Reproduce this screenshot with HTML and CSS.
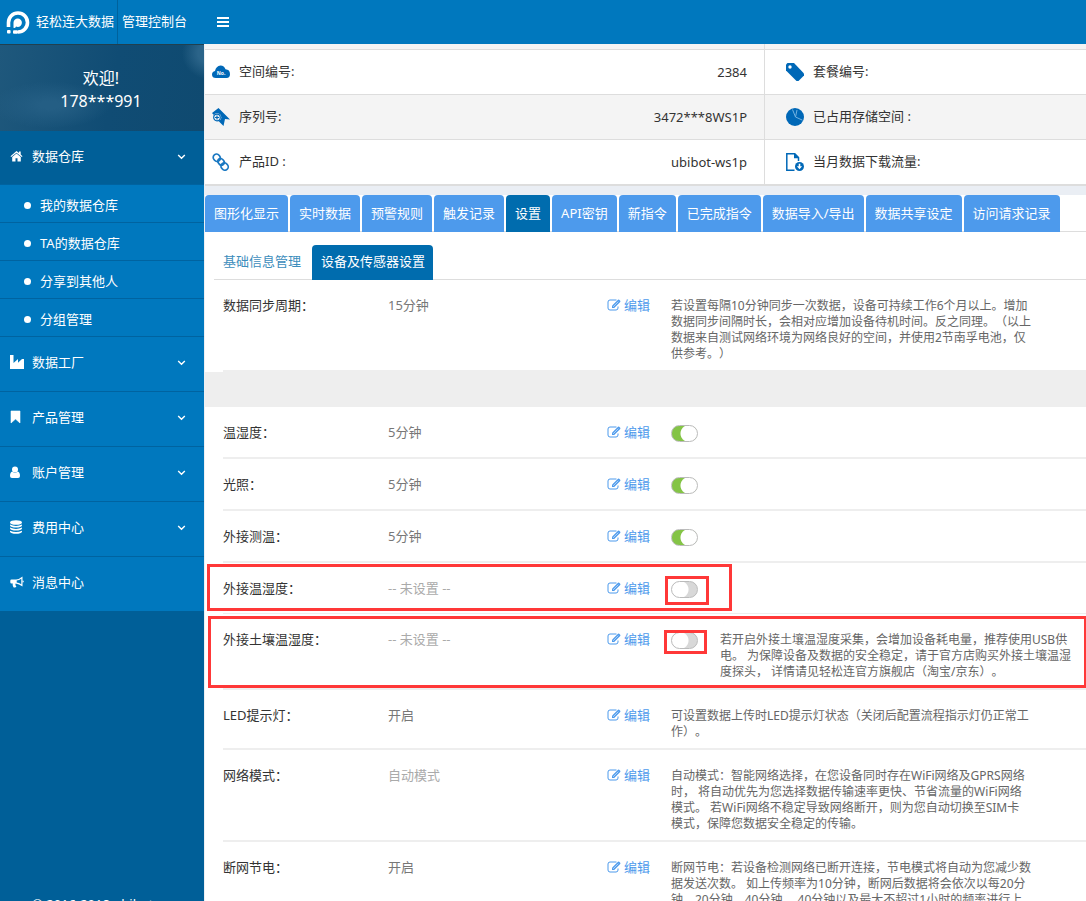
FILE: index.html
```html
<!DOCTYPE html>
<html lang="zh-CN">
<head>
<meta charset="utf-8">
<title>轻松连大数据 管理控制台</title>
<link rel="stylesheet" href="styles.css">
</head>
<body>
<svg class="defs" aria-hidden="true">
  <symbol id="edit" viewBox="0 0 14 12">
    <path d="M9.500 1H3Q1 1 1 3v6q0 2 2 2h6q2 0 2-2V7.500" fill="none" stroke="currentColor" stroke-width="1"/>
    <path d="M5 9V6.800L11 .8q.6-.5 1.200 0l1 1q.5.600 0 1.200L7.200 9z" fill="currentColor"/>
    <path d="M6 7.900 11.300 2.600" stroke="#fff" stroke-width=".6"/>
  </symbol>
  <symbol id="down" viewBox="0 0 8 6"><path d="M.7 1 4 4.300 7.300 1" fill="none" stroke="currentColor" stroke-width="1.400"/></symbol>
</svg>
<header class="topbar">
  <a class="brand" href="#">
    <svg width="24" height="24" viewBox="0 0 24 24"><path d="M2.500 16V11.500A9.500 9.500 0 1 1 12 21" fill="none" stroke="#fff" stroke-width="3.600"/><path d="M7.500 16.800V11.700a4.200 4.200 0 1 1 4.200 4.200q-1 0-1.700-.4-.4 2-2.500 1.300z" fill="#fff"/><rect x="1" y="19" width="3.600" height="3.600" rx="1" fill="#fff"/><rect x="7" y="19.200" width="5" height="3.600" rx="1" fill="#fff"/></svg>
    <span>轻松连大数据</span>
  </a>
  <a class="console" href="#">管理控制台</a>
  <button class="burger" aria-label="菜单"><svg width="12" height="10" viewBox="0 0 12 10"><path d="M0 1h12M0 5h12M0 9h12" stroke="#fff" stroke-width="2"/></svg></button>
</header>
<div class="shell">
  <aside class="sidebar">
    <div class="user"><div>欢迎!</div><div>178***991</div></div>
    <nav>
      <a class="item active" href="#"><svg class="mi" viewBox="0 0 14 14"><path d="M6.500 2 .5 7.200l.7.900L6.500 3.700l5.300 4.400.7-.9-1.800-1.600V2.500H9v1.600z" fill="#fff"/><path d="M6.500 4.600 2.200 8.100V12.500H5.500V9.300h2v3.200h3.300V8.100z" fill="#fff"/></svg><span>数据仓库</span><svg class="arrow"><use href="#down"/></svg></a>
      <div class="sub">
        <a href="#">我的数据仓库</a>
        <a href="#">TA的数据仓库</a>
        <a href="#">分享到其他人</a>
        <a href="#">分组管理</a>
      </div>
      <a class="item" href="#"><svg class="mi" viewBox="0 0 14 14"><path d="M0 0h3.500v8L8 4v3.800L12 4h2v10H0z" fill="#fff"/></svg><span>数据工厂</span><svg class="arrow"><use href="#down"/></svg></a>
      <a class="item" href="#"><svg class="mi" viewBox="0 0 14 14"><path d="M1 1h9v12L5.500 9 1 13z" fill="#fff" stroke="#fff" stroke-width=".6" stroke-linejoin="round"/></svg><span>产品管理</span><svg class="arrow"><use href="#down"/></svg></a>
      <a class="item" href="#"><svg class="mi" viewBox="0 0 14 14"><circle cx="5" cy="4.500" r="3" fill="#fff"/><path d="M2.400 6.500Q0 7 0 11q0 2 2 2h6q2 0 2-2 0-4-2.400-4.500Q5 9 2.400 6.500z" fill="#fff"/></svg><span>账户管理</span><svg class="arrow"><use href="#down"/></svg></a>
      <a class="item" href="#"><svg class="mi" viewBox="0 0 14 14"><ellipse cx="6" cy="2.500" rx="6" ry="2.300" fill="#fff"/><path d="M0 4.500q6 2.800 12 0v1q-1 2-6 2t-6-2zM0 7.600q6 2.800 12 0v1q-1 2-6 2t-6-2zM0 10.700q6 2.800 12 0v1q-1 2-6 2t-6-2z" fill="#fff"/></svg><span>费用中心</span><svg class="arrow"><use href="#down"/></svg></a>
      <a class="item" href="#"><svg class="mi" viewBox="0 0 14 14"><path d="M1.500 4.500H6Q9 4.500 12.500 1.500v10Q9 8.800 5.500 8.500q-.6 1.500.9 3.300-1.200 1.300-3 .4-1.200-2.300-.6-3.700H1.500Q.3 8.500.3 7.300V5.700Q.3 4.500 1.500 4.500z" fill="#fff"/><path d="M6.700 5.500Q9.300 5.300 11.300 3.800v5.500Q9 7.900 6.700 7.600z" fill="#0078be"/><path d="M12.500 5.500q1.300.2 1.300 1t-1.300 1z" fill="#fff"/></svg><span>消息中心</span></a>
    </nav>
    <div class="copy">© 2016-2018 ubibot</div>
  </aside>
  <main>
    <table class="info">
      <tbody>
        <tr class="sliver"><td colspan="2"></td><td></td></tr>
        <tr>
          <th scope="row"><svg class="ii" viewBox="0 0 18 18"><path d="M4 15Q0 15 0 11.500 0 8.500 3 8 4 3 8.500 2.500q3.800 0 5 3.800 4.500.2 4.500 5Q18 15 14.500 15z" fill="#0068b7"/><text x="9" y="12" class="no">No.</text></svg>空间编号:</th><td>2384</td>
          <th scope="row" class="right"><svg class="ii" viewBox="0 0 18 18"><path d="M0 1.500 1.500 0H8l10 10.500v2L12.500 18h-2L0 7.500z" fill="#0068b7"/><circle cx="4" cy="4" r="1.700" fill="#fff"/></svg>套餐编号:</th>
        </tr>
        <tr>
          <th scope="row"><svg class="ii" viewBox="0 0 18 18"><path d="M0 5 6.500 0 18 11.500l-5-.4-1.500 6.900L7 13.500z" fill="#0068b7"/><circle cx="5" cy="9.500" r="4.300" fill="#f4f4f4"/><circle cx="5" cy="9.500" r="3.300" fill="none" stroke="#0068b7" stroke-width="1.200"/><path d="M5 7.500v4M3 9.500h4M7.500 12l1.500 1.500" stroke="#0068b7" stroke-width="1.200"/></svg>序列号:</th><td>3472***8WS1P</td>
          <th scope="row" class="right"><svg class="ii" viewBox="0 0 18 18"><circle cx="9" cy="9" r="9" fill="#0068b7"/><path d="M6.500 1.500 9.500 9 11 2M9.500 9l7 3.200" fill="none" stroke="#72b2e0" stroke-width="1"/></svg>已占用存储空间 :</th>
        </tr>
        <tr>
          <th scope="row"><svg class="ii" viewBox="0 0 18 18"><g fill="none" stroke="#1a78c2" stroke-width="1.700"><rect x="1" y="1.500" width="7.600" height="6.600" rx="3.300" transform="rotate(50 4.800 4.800)"/><rect x="5.500" y="6" width="7" height="5.600" rx="2.800" transform="rotate(50 9 8.800)"/><rect x="8.800" y="10.200" width="7.600" height="6.600" rx="3.300" transform="rotate(50 12.600 13.500)"/></g></svg>产品ID :</th><td>ubibot-ws1p</td>
          <th scope="row" class="right"><svg class="ii" viewBox="0 0 18 18"><path d="M8.500 17.200H.8V.8h8l3.700 3.700V8" fill="none" stroke="#0068b7" stroke-width="1.500"/><path d="M8 0l5.200 5.200H8z" fill="#0068b7"/><circle cx="13.500" cy="13.500" r="4.500" fill="#0068b7"/><path d="M12.700 10.700h1.600v2.500h1.800l-2.600 3-2.600-3h1.800z" fill="#fff"/></svg>当月数据下载流量:</th>
        </tr>
      </tbody>
    </table>
    <nav class="tabs">
      <a href="#">图形化显示</a><a href="#">实时数据</a><a href="#">预警规则</a><a href="#">触发记录</a><a href="#" class="on">设置</a><a href="#">API密钥</a><a href="#">新指令</a><a href="#">已完成指令</a><a href="#">数据导入/导出</a><a href="#">数据共享设定</a><a href="#">访问请求记录</a>
    </nav>
    <div class="panel">
      <nav class="subtabs"><a href="#">基础信息管理</a><a href="#" class="on">设备及传感器设置</a></nav>
      <section class="row">
        <div class="label">数据同步周期：</div><div class="val">15分钟</div>
        <button class="edit"><svg><use href="#edit"/></svg>编辑</button>
        <p>若设置每隔10分钟同步一次数据，设备可持续工作6个月以上。增加数据同步间隔时长，会相对应增加设备待机时间。反之同理。（以上数据来自测试网络环境为网络良好的空间，并使用2节南孚电池，仅供参考。）</p>
      </section>
      <div class="band"></div>
      <section class="row">
        <label class="label" for="s1">温湿度：</label><div class="val">5分钟</div>
        <button class="edit"><svg><use href="#edit"/></svg>编辑</button>
        <div class="sw"><input type="checkbox" id="s1" checked></div>
      </section>
      <section class="row">
        <label class="label" for="s2">光照：</label><div class="val">5分钟</div>
        <button class="edit"><svg><use href="#edit"/></svg>编辑</button>
        <div class="sw"><input type="checkbox" id="s2" checked></div>
      </section>
      <section class="row">
        <label class="label" for="s3">外接测温：</label><div class="val">5分钟</div>
        <button class="edit"><svg><use href="#edit"/></svg>编辑</button>
        <div class="sw"><input type="checkbox" id="s3" checked></div>
      </section>
      <section class="row thin">
        <label class="label" for="s4">外接温湿度：</label><div class="val unset">-- 未设置 --</div>
        <button class="edit"><svg><use href="#edit"/></svg>编辑</button>
        <div class="sw"><input type="checkbox" id="s4"><i class="mark tall"></i></div>
        <i class="mark short-row"></i>
      </section>
      <section class="row">
        <label class="label" for="s5">外接土壤温湿度：</label><div class="val unset">-- 未设置 --</div>
        <button class="edit"><svg><use href="#edit"/></svg>编辑</button>
        <div class="sw with-note"><input type="checkbox" id="s5"><p>若开启外接土壤温湿度采集，会增加设备耗电量，推荐使用USB供电。 为保障设备及数据的安全稳定，请于官方店购买外接土壤温湿度探头， 详情请见轻松连官方旗舰店（淘宝/京东）。</p><i class="mark low"></i></div>
        <i class="mark full-row"></i>
      </section>
      <section class="row">
        <div class="label">LED提示灯：</div><div class="val">开启</div>
        <button class="edit"><svg><use href="#edit"/></svg>编辑</button>
        <p>可设置数据上传时LED提示灯状态（关闭后配置流程指示灯仍正常工作）。</p>
      </section>
      <section class="row">
        <div class="label">网络模式：</div><div class="val unset">自动模式</div>
        <button class="edit"><svg><use href="#edit"/></svg>编辑</button>
        <p>自动模式：智能网络选择，在您设备同时存在WiFi网络及GPRS网络时， 将自动优先为您选择数据传输速率更快、节省流量的WiFi网络模式。 若WiFi网络不稳定导致网络断开，则为您自动切换至SIM卡<br>模式，保障您数据安全稳定的传输。</p>
      </section>
      <section class="row">
        <div class="label">断网节电：</div><div class="val">开启</div>
        <button class="edit"><svg><use href="#edit"/></svg>编辑</button>
        <p>断网节电：若设备检测网络已断开连接，节电模式将自动为您减少数据发送次数。 如上传频率为10分钟，断网后数据将会依次以每20分钟、20分钟、40分钟、 40分钟以及最大不超过1小时的频率进行上传。</p>
      </section>
    </div>
  </main>
</div>
</body>
</html>
```
FILE: styles.css
```css
* { box-sizing: border-box; }
body {
  margin: 0;
  height: 100vh;
  overflow: hidden;
  display: flex;
  flex-direction: column;
  background: #fff;
  color: #333;
  font: 13px/16px "Noto Sans", "Noto Sans CJK SC", sans-serif;
  text-spacing-trim: space-all;
}
a { color: inherit; text-decoration: none; }
button { border: 0; padding: 0; background: none; font: inherit; cursor: pointer; }
p { margin: 0; }
.defs { display: none; }

.topbar {
  flex: none;
  display: flex;
  height: 44px;
  background: #0078be;
  color: #fff;
  line-height: 42px;
}
.brand { display: flex; align-items: center; gap: 6px; padding: 0 3px 0 6px; border-right: 1px solid #00629c; }
.brand svg { margin-top: 2px; }
.brand span { height: 44px; }
.console { padding: 0 30px 0 4px; }
.burger { display: flex; align-items: center; }

.shell { flex: 1; min-height: 0; display: flex; }
.sidebar {
  flex: none;
  width: 204px;
  display: flex;
  flex-direction: column;
  background: #005f98;
  color: #fff;
}
.user {
  height: 87px;
  padding: 22px 2px 0 0;
  border-top: 1px solid #21404f;
  text-align: center;
  font-size: 16px;
  line-height: 23px;
  background:
    radial-gradient(circle at 208px 8px, #2b6489 0 10px, transparent 26px),
    radial-gradient(ellipse at 50px 60px, #245e84 0 10px, transparent 60px),
    linear-gradient(100deg, #1f587c, #104c74 55%, #0f4a70);
}
.item {
  display: flex;
  align-items: center;
  height: 55px;
  padding: 0 18px 5px 10px;
  border-bottom: 1px solid #0063a0;
  background: #0078be;
}
.item.active { height: 54px; padding-bottom: 4px; background: #005f98; }
.item:last-child { border-bottom: 0; height: 54px; padding-bottom: 4px; }
.mi { width: 14px; height: 14px; margin-right: 8px; }
.arrow { width: 9px; height: 6px; margin: 3px 0 0 auto; }
.sub a {
  display: flex;
  align-items: center;
  gap: 9px;
  height: 38px;
  padding: 2px 0 0 24px;
  border-bottom: 1px solid #0063a0;
  background: #0078be;
}
.sub a::before { content: ""; width: 7px; height: 7px; margin-top: 2px; border-radius: 50%; background: #fff; }
.copy { flex: none; margin: auto 0 -11px; padding-left: 32px; }

main { flex: 1; min-width: 0; overflow: hidden; border-left: 1px solid #eceff3; }
.info { width: 100%; border-collapse: separate; border-spacing: 0; border-bottom: 1px solid #ddd; }
.info td, .info th {
  height: 45px;
  padding: 0 17px 0 7px;
  border-bottom: 1px solid #ddd;
  font-weight: 400;
  text-align: left;
}
.info td { text-align: right; }
.info .right { width: 322px; padding-left: 21px; border-left: 1px solid #ddd; }
.info tr:nth-child(odd) > * { background: #f4f4f4; }
.info .sliver td { height: 6px; padding: 0; }
.sliver td + td { border-left: 1px solid #ddd; }
.ii { width: 18px; height: 18px; margin-right: 9px; vertical-align: middle; }
.no { fill: #fff; font: 700 5px "Noto Sans", sans-serif; text-anchor: middle; }

.tabs { display: flex; gap: 2px; height: 46px; padding-top: 9px; background: linear-gradient(#eaeef4 9px, #fff 9px); border-bottom: 1px solid #ddd; white-space: nowrap; }
.tabs a { height: 37px; padding: 0 9px; border-radius: 4px 4px 0 0; background: #4d9aec; color: #fff; line-height: 36px; }
.tabs .on, .subtabs .on { background: #006cae; color: #fff; }
.subtabs { display: flex; height: 48px; margin-left: 9px; padding-top: 13px; border-bottom: 1px solid #ddd; color: #3c8dbc; line-height: 32px; }
.subtabs a { height: 35px; padding: 0 8px 0 9px; border-radius: 4px 4px 0 0; }
.subtabs a + a { margin-left: 3px; }

.row {
  position: relative;
  display: grid;
  grid-template-columns: 165px 219px 64px 1fr;
  align-items: start;
  min-height: 52px;
  margin-left: 18px;
  padding: 17px 0 9px;
  border-bottom: 2px solid #eee;
}
.row.thin { min-height: 51px; border-bottom-width: 1px; }
.band { height: 35px; background: #eee; }
.val { color: #777; }
.unset { color: #aaa; }
.edit { display: flex; align-items: center; gap: 3px; color: #4d9aec; }
.edit svg { width: 14px; height: 12px; }
.row p { max-width: 362px; padding-top: 1px; margin-bottom: -1px; color: #666; font-size: 12px; }
.sw { position: relative; display: flex; align-items: flex-start; height: 16px; }
.with-note { height: auto; gap: 22px; }
.sw input {
  flex: none;
  appearance: none;
  width: 27px;
  height: 17px;
  margin: 1px 0 0;
  border: 1px solid #bbb;
  border-radius: 9px;
  background: radial-gradient(circle at 8px 50%, #fff 8px, #d8d8d8 9px);
}
.sw input:checked { background: radial-gradient(circle at 17px 50%, #fff 8px, #84c446 9px); }
.with-note p { max-width: 354px; }
.mark { position: absolute; border: 3px solid #ff3838; pointer-events: none; }
.short-row { left: -16px; top: 1px; width: 525px; height: 47px; }
.full-row { left: -15px; right: -1px; top: 2px; bottom: 0; }
.tall { left: -6px; top: -4px; width: 44px; height: 29px; }
.low { left: -7px; top: -1px; width: 43px; height: 24px; }
```
